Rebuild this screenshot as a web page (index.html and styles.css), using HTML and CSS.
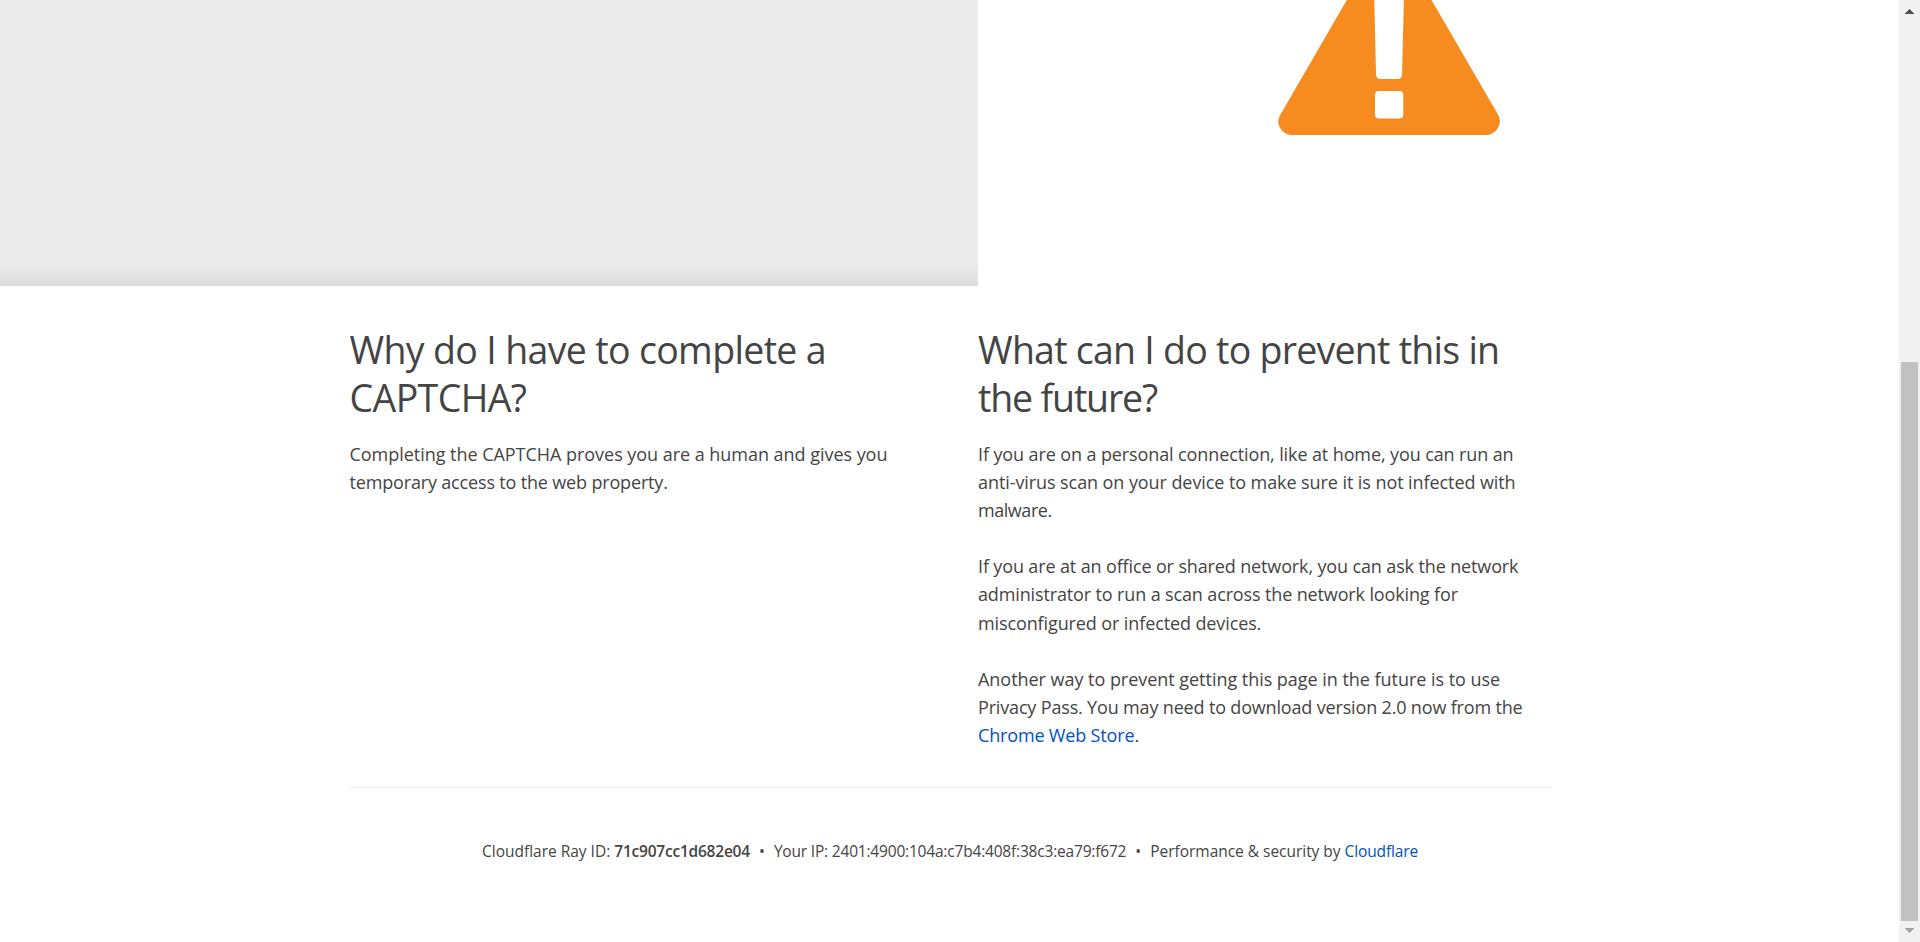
FILE: index.html
```
<!DOCTYPE html>
<html lang="en">
<head>
<meta charset="utf-8">
<title>Attention Required! | Cloudflare</title>
<link rel="stylesheet" href="styles.css">
</head>
<body>
<div class="viewport">
  <div class="page">
    <section class="hero">
      <div class="captcha-panel"></div>
      <div class="warning">
        <svg class="warning-icon" width="224" height="136" viewBox="1277 0 224 136" aria-hidden="true">
          <path fill="#f68b1f" d="M1346.8 0H1431.5L1498 114.500Q1501.500 121 1498.500 127Q1495 133.500 1488 135H1290Q1283 133.500 1279.500 127Q1276.500 121 1280.500 114.500Z"/>
          <path fill="#fff" d="M1374.3 0H1403.9L1402 74.5Q1401.7 79 1397.5 79H1380.5Q1376.300 79 1376 74.500Z"/>
          <rect fill="#fff" x="1375" y="91" width="28.300" height="27.500" rx="4"/>
        </svg>
      </div>
    </section>
    <main class="wrapper">
      <div class="columns">
        <section class="column">
          <h2><span class="line h-a">Why do I have to complete a</span> <span class="line h-b">CAPTCHA?</span></h2>
          <p><span class="line even">Completing the CAPTCHA proves you are a human and gives you</span> <span class="line tight">temporary access to the web property.</span></p>
        </section>
        <section class="column">
          <h2><span class="line h-d">What can I do to prevent this in</span> <span class="line h-c">the future?</span></h2>
          <p><span class="line snug">If you are on a personal connection, like at home, you can run an</span> <span class="line soft">anti-virus scan on your device to make sure it is not infected with</span> <span class="line tighter">malware.</span></p>
          <p><span class="line firm">If you are at an office or shared network, you can ask the network</span> <span class="line firm">administrator to run a scan across the network looking for</span> <span class="line snug">misconfigured or infected devices.</span></p>
          <p><span class="line even">Another way to prevent getting this page in the future is to use</span> <span class="line tight">Privacy Pass. You may need to download version 2.0 now from the</span> <span class="line tight"><a href="#">Chrome Web Store</a>.</span></p>
        </section>
      </div>
      <footer class="footer">
        <span class="ray">Cloudflare Ray ID: <strong>71c907cc1d682e04</strong></span>
        <span class="dot">•</span>
        <span class="ip">Your IP: 2401:4900:104a:c7b4:408f:38c3:ea79:f672</span>
        <span class="dot">•</span>
        <span class="by">Performance &amp; security by <a href="#">Cloudflare</a></span>
      </footer>
    </main>
  </div>
  <div class="scrollbar">
    <svg width="9" height="5" viewBox="0 0 9 5" shape-rendering="crispEdges"><path fill="#505050" d="M4 0h1v1h1v1h1v1h1v1h1v1H0V4h1V3h1V2h1V1h1z"/></svg>
    <div class="thumb"></div>
    <svg width="9" height="5" viewBox="0 0 9 5" shape-rendering="crispEdges"><path fill="#a3a3a3" d="M0 0h9v1H8v1H7v1H6v1H5v1H4V4H3V3H2V2H1V1H0z"/></svg>
  </div>
</div>
</body>
</html>
```
FILE: styles.css
```
* { box-sizing: border-box; }
body {
  margin: 0;
  background: #fff;
  color: #444;
  font-family: "Open Sans", "Noto Sans", sans-serif;
}
a { color: #0051c3; text-decoration: none; }
.viewport { display: flex; height: 942px; overflow: hidden; }
.page { flex: 1; }

.hero { display: flex; height: 286px; }
.captcha-panel {
  width: 978px;
  background: linear-gradient(to bottom, #ebebeb 266px, #dcdcdc 286px);
}
.warning { padding-left: 299px; }
.warning-icon { display: block; }

.wrapper { width: 1201.5px; margin-left: 349.5px; }
.columns {
  display: grid;
  grid-template-columns: 572px 572px;
  column-gap: 56.5px;
  height: 502px;
  padding-top: 40px;
  border-bottom: 1px solid #ebebeb;
}
.line { display: block; white-space: nowrap; }
h2 {
  margin: 0 0 18px;
  font-size: 37.5px;
  font-weight: 400;
  line-height: 48px;
}
p { margin: 0 0 28.1px; font-size: 18px; line-height: 28.1px; }
.h-a { letter-spacing: -0.66px; }
.h-b { letter-spacing: -0.6px; }
.h-c { letter-spacing: -1.15px; }
.h-d { letter-spacing: -0.75px; }
.even { letter-spacing: -0.035px; }
.soft { letter-spacing: -0.08px; }
.snug { letter-spacing: -0.11px; }
.firm { letter-spacing: -0.135px; }
.tight { letter-spacing: -0.165px; }
.tighter { letter-spacing: -0.45px; }

.footer {
  display: flex;
  padding: 51px 0 0 132.5px;
  font-size: 15.5px;
  line-height: 24px;
  white-space: nowrap;
}
.footer strong { font-weight: 600; letter-spacing: -0.22px; }
.dot { width: 24px; text-align: center; }
.ray { letter-spacing: -0.01px; }
.by { letter-spacing: -0.03px; }
.ip { letter-spacing: -0.19px; }
.by a { letter-spacing: -0.13px; }

.scrollbar {
  width: 21px;
  display: flex;
  flex-direction: column;
  align-items: center;
  padding: 9px 0;
  background: #f1f1f1;
}
.thumb { width: 17px; height: 559px; margin: 348px 0 7px; background: #c1c1c1; flex: none; }
```
